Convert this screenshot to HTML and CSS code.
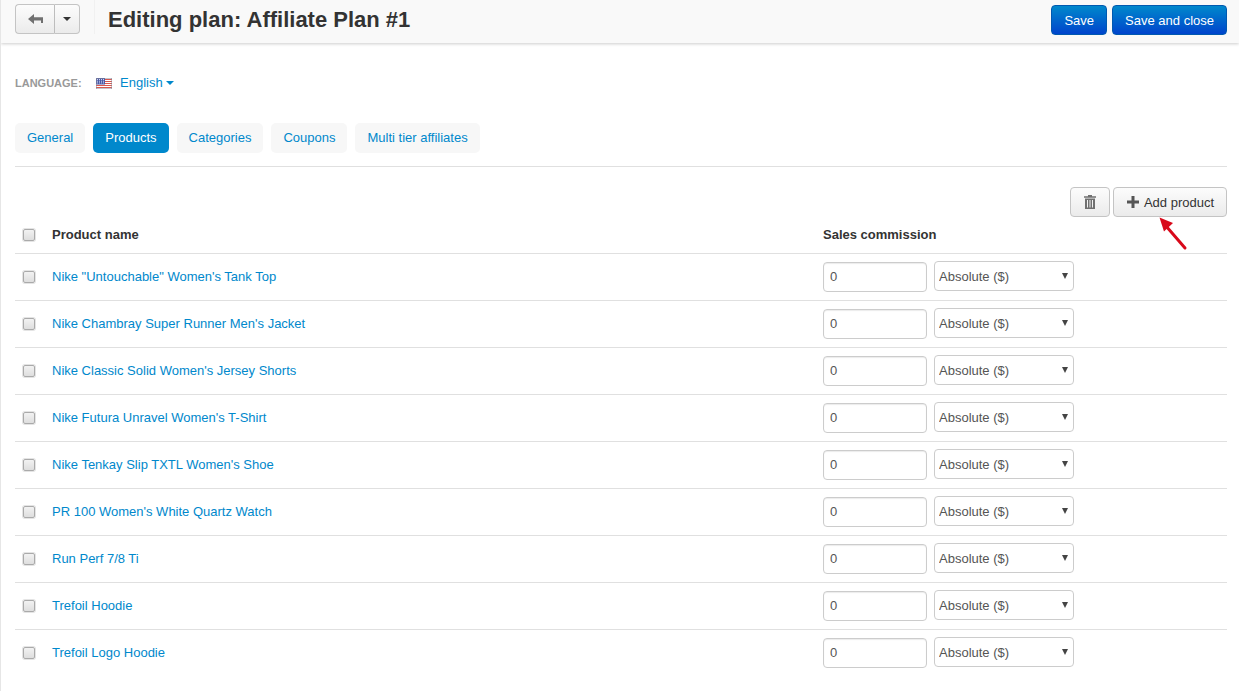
FILE: index.html
```html
<!DOCTYPE html>
<html lang="en">
<head>
<meta charset="utf-8">
<title>Editing plan: Affiliate Plan #1</title>
<link rel="stylesheet" href="styles.css">
</head>
<body>
<header class="topbar">
  <div class="btn-group">
    <button class="tool back" aria-label="Back">
      <svg width="15" height="10" viewBox="0 0 15 10"><path d="M0 5 6 0v3.200h9V9h-2V6.400H6V10z" fill="#707070"/></svg>
    </button>
    <button class="tool caret" aria-label="More"><span class="tri-dark"></span></button>
  </div>
  <h1 class="title">Editing plan: Affiliate Plan #1</h1>
  <div class="actions">
    <button class="primary">Save</button>
    <button class="primary">Save and close</button>
  </div>
</header>
<main class="content">
  <div class="language">
    <span class="lang-label">LANGUAGE:</span>
    <svg class="flag" width="16" height="11" viewBox="0 0 16 11">
      <rect width="16" height="11" fill="#fff"/>
      <path d="M0 1.500h16M0 3.500h16M0 5.500h16M0 7.500h16M0 9.500h16" stroke="#d8574f" stroke-width="1"/>
      <rect width="9" height="6.500" fill="#4a5aa8"/>
      <path d="M1 1.500h7M1 3.200h7M1 4.900h7" stroke="#dfe3f5" stroke-width=".9" stroke-dasharray="1 1"/>
      <rect x=".25" y=".25" width="15.500" height="10.500" fill="none" stroke="#8a8a9a" stroke-width=".5"/>
    </svg>
    <a class="lang-link">English</a><span class="tri-blue"></span>
  </div>
  <nav class="tabs">
    <a class="tab">General</a>
    <a class="tab active">Products</a>
    <a class="tab">Categories</a>
    <a class="tab">Coupons</a>
    <a class="tab">Multi tier affiliates</a>
  </nav>
  <div class="toolbar">
    <button class="tool-btn trash" aria-label="Delete">
      <svg width="12" height="14" viewBox="0 0 12 14"><path d="M4 0h4v1.200h4v1.600H0V1.200h4zM1 3.600h10V14H1zM3 5v7.500h1V5zm2.500 0v7.500h1V5zM8 5v7.500h1V5z" fill="#707070" fill-rule="evenodd"/></svg>
    </button>
    <button class="tool-btn add">
      <svg width="12" height="12" viewBox="0 0 12 12"><path d="M4.500 0h3v4.500H12v3H7.500V12h-3V7.500H0v-3h4.500z" fill="#555"/></svg>
      Add product
    </button>
  </div>
  <svg class="arrow" width="32" height="34" viewBox="0 0 32 34"><path d="M28 31 9 9" stroke="#d8091a" stroke-width="3" stroke-linecap="round"/><path d="M2.500 .5 16 6 7 14.500z" fill="#d8091a"/></svg>
  <div class="row head">
    <span class="check"></span>
    <span class="name">Product name</span>
    <span class="commission">Sales commission</span>
  </div>
  <div class="row">
    <span class="check"></span><a class="name">Nike "Untouchable" Women's Tank Top</a>
    <div class="commission"><input class="num" value="0"><label class="sel"><select><option>Absolute ($)</option></select></label></div>
  </div>
  <div class="row">
    <span class="check"></span><a class="name">Nike Chambray Super Runner Men's Jacket</a>
    <div class="commission"><input class="num" value="0"><label class="sel"><select><option>Absolute ($)</option></select></label></div>
  </div>
  <div class="row">
    <span class="check"></span><a class="name">Nike Classic Solid Women's Jersey Shorts</a>
    <div class="commission"><input class="num" value="0"><label class="sel"><select><option>Absolute ($)</option></select></label></div>
  </div>
  <div class="row">
    <span class="check"></span><a class="name">Nike Futura Unravel Women's T-Shirt</a>
    <div class="commission"><input class="num" value="0"><label class="sel"><select><option>Absolute ($)</option></select></label></div>
  </div>
  <div class="row">
    <span class="check"></span><a class="name">Nike Tenkay Slip TXTL Women's Shoe</a>
    <div class="commission"><input class="num" value="0"><label class="sel"><select><option>Absolute ($)</option></select></label></div>
  </div>
  <div class="row">
    <span class="check"></span><a class="name">PR 100 Women's White Quartz Watch</a>
    <div class="commission"><input class="num" value="0"><label class="sel"><select><option>Absolute ($)</option></select></label></div>
  </div>
  <div class="row">
    <span class="check"></span><a class="name">Run Perf 7/8 Ti</a>
    <div class="commission"><input class="num" value="0"><label class="sel"><select><option>Absolute ($)</option></select></label></div>
  </div>
  <div class="row">
    <span class="check"></span><a class="name">Trefoil Hoodie</a>
    <div class="commission"><input class="num" value="0"><label class="sel"><select><option>Absolute ($)</option></select></label></div>
  </div>
  <div class="row last">
    <span class="check"></span><a class="name">Trefoil Logo Hoodie</a>
    <div class="commission"><input class="num" value="0"><label class="sel"><select><option>Absolute ($)</option></select></label></div>
  </div>
</main>
</body>
</html>
```
FILE: styles.css
```css
* { box-sizing: border-box; }
html, body { margin: 0; height: 691px; overflow: hidden; }
body {
  background: #fff;
  color: #333;
  font-family: "Liberation Sans", Arial, sans-serif;
  font-size: 13px;
  line-height: 18px;
  position: relative;
  border-left: 1px solid #e6e6e6;
}
button { font-family: inherit; margin: 0; cursor: pointer; }

.topbar {
  height: 43px;
  background: #f9f9f9;
  box-shadow: 0 1px 3px rgba(0,0,0,.2);
  display: flex;
  align-items: flex-start;
  padding: 4px 12px 0 14px;
}
.btn-group { display: flex; height: 30px; position: relative; }
.btn-group::after {
  content: "";
  width: 1px;
  height: 34px;
  margin: -4px 0 0 14px;
  background: #f1f1f1;
}
.tool {
  height: 30px;
  border: 1px solid #c4c4c4;
  background: linear-gradient(#fcfcfc, #ebebeb);
  padding: 0;
  display: flex;
  align-items: center;
  justify-content: center;
}
.back { width: 40px; border-radius: 4px 0 0 4px; border-right: 1px solid #bdbdbd; }
.caret { width: 25px; border-left: 0; border-radius: 0 4px 4px 0; }
.tri-dark {
  width: 0; height: 0;
  border: 4px solid transparent;
  border-top-color: #333;
  border-bottom: 0;
}
.title {
  margin: 0 0 0 13px;
  font-size: 22px;
  font-weight: bold;
  line-height: 31px;
  color: #333;
}
.actions { margin-left: auto; display: flex; gap: 5px; margin-top: 1px; }
.primary {
  height: 30px;
  border: 1px solid #0059b0;
  border-radius: 4px;
  background: linear-gradient(#0088cc, #0044cc);
  color: #fff;
  font-size: 13px;
  padding: 0 12px;
}

.content { padding: 0 12px 0 14px; position: relative; }
.language {
  height: 18px;
  margin-top: 31px;
  display: flex;
  align-items: center;
}
.lang-label { font-size: 11px; font-weight: bold; color: #999; width: 81px; }
.flag { margin-right: 8px; }
.lang-link { color: #0088cc; }
.tri-blue {
  width: 0; height: 0;
  margin-left: 3px;
  border: 4px solid transparent;
  border-top-color: #0088cc;
  border-bottom: 0;
}
.tabs {
  display: flex;
  gap: 8px;
  margin-top: 31px;
  padding-bottom: 13px;
  border-bottom: 1px solid #e0e0e0;
}
.tab {
  height: 30px;
  padding: 6px 12px;
  border-radius: 5px;
  background: #f7f7f7;
  color: #0088cc;
}
.tab.active { background: #0088cc; color: #fff; }
.toolbar {
  display: flex;
  justify-content: flex-end;
  gap: 3px;
  margin-top: 20px;
}
.tool-btn {
  height: 30px;
  border: 1px solid #c4c4c4;
  border-radius: 4px;
  background: linear-gradient(#fcfcfc, #ebebeb);
  color: #333;
  font-size: 13px;
  display: flex;
  align-items: center;
  justify-content: center;
  padding: 0;
}
.trash { width: 40px; }
.add { width: 114px; gap: 5px; padding-left: 1px; }
.arrow { position: absolute; left: 1156px; top: 143px; }

.row {
  height: 47px;
  display: flex;
  align-items: center;
  border-bottom: 1px solid #e0e0e0;
  padding-left: 8px;
}
.row.last { border-bottom-color: transparent; }
.row.head { height: 37px; font-weight: bold; align-items: flex-end; padding-bottom: 9px; }
.check {
  width: 12px;
  height: 12px;
  flex: none;
  border: 1px solid #aaa;
  border-radius: 2px;
  background: linear-gradient(#f2f2f2, #dedede);
  box-shadow: 0 0 0 1px #e4e4e4;
}
.row.head .check { margin-bottom: 3px; }
.name { width: 771px; margin-left: 17px; flex: none; color: #0088cc; }
.row.head .name, .row.head .commission { color: #333; }
.commission { display: flex; align-items: center; gap: 7px; }
.num {
  width: 104px;
  height: 30px;
  border: 1px solid #ccc;
  border-radius: 4px;
  background: #fff;
  color: #555;
  font: 13px "Liberation Sans", Arial, sans-serif;
  padding: 0 6px 2px;
  box-shadow: inset 0 1px 1px rgba(0,0,0,.08);
}
.sel { position: relative; display: block; width: 140px; height: 30px; margin-top: -2px; }
.sel::after {
  content: "";
  position: absolute;
  right: 6px;
  top: 12px;
  border: 3.500px solid transparent;
  border-top: 6px solid #444;
  border-bottom: 0;
}
.sel select {
  appearance: none;
  width: 140px;
  height: 30px;
  border: 1px solid #ccc;
  border-radius: 4px;
  background: #fff;
  color: #555;
  font: 13px "Liberation Sans", Arial, sans-serif;
  padding: 0 4px;
}
```
